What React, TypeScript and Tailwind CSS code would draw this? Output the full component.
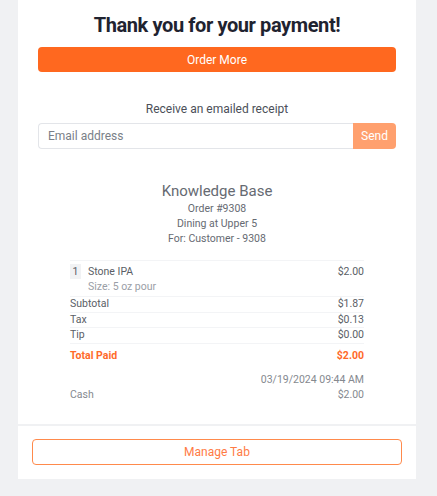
const font = { fontFamily: 'Roboto, "Liberation Sans", sans-serif' };

function Row({ label, value, className = '' }: { label: string; value: string; className?: string }) {
  return (
    <div className={`flex justify-between border-t border-gray-100 h-[15.5px] items-center ${className}`}>
      <span>{label}</span>
      <span>{value}</span>
    </div>
  );
}

export default function App() {
  return (
    <div className="min-h-[496px] w-[437px] bg-[#f0f1f3]" style={font}>
      <div className="mx-[18px] w-[398px]">
        <div className="bg-white px-5 pt-[13px] pb-[22px]">
          <h1 className="text-center text-[20px] font-bold leading-[24px] text-[#1f2330] tracking-[-0.4px]">
            Thank you for your payment!
          </h1>
          <button className="mt-[10px] w-full h-[25px] rounded bg-[#ff681f] text-white text-[12px]">
            Order More
          </button>

          <p className="mt-[28px] text-center text-[12px] text-[#4b4f58]">Receive an emailed receipt</p>
          <div className="mt-[5px] flex h-[26px]">
            <input
              className="flex-1 min-w-0 rounded-l border border-r-0 border-[#e3e5e9] px-[9px] text-[12px] text-gray-700 placeholder:text-[#7a7f88] outline-none"
              placeholder="Email address"
            />
            <button className="w-[43px] rounded-r bg-[#ffa06e] text-white text-[12px]">Send</button>
          </div>

          <div className="mt-[33px] text-center text-[#666a72]">
            <div className="text-[15px] leading-[18px]">Knowledge Base</div>
            <div className="text-[10.5px] leading-[15px] mt-[1px]">Order #9308</div>
            <div className="text-[10.5px] leading-[15px]">Dining at Upper 5</div>
            <div className="text-[10.5px] leading-[15px]">For: Customer - 9308</div>
          </div>

          <div className="mt-[14px] mx-[32px] text-[10.5px] text-[#5a5e66]">
            <div className="flex border-t border-gray-100 pt-[3px] pb-[2px]">
              <span className="w-[11px] h-[15px] bg-[#f1f2f4] flex items-center justify-center">1</span>
              <div className="ml-[7px] flex-1">
                <div className="flex justify-between leading-[15px]">
                  <span>Stone IPA</span>
                  <span>$2.00</span>
                </div>
                <div className="text-[#9a9ea6] leading-[15px]">Size: 5 oz pour</div>
              </div>
            </div>
            <Row label="Subtotal" value="$1.87" />
            <Row label="Tax" value="$0.13" />
            <Row label="Tip" value="$0.00" />
            <div className="flex justify-between border-t border-gray-100 pt-[4px] font-bold text-[#ff6a2a] leading-[16px]">
              <span>Total Paid</span>
              <span>$2.00</span>
            </div>
            <div className="mt-[8px] text-right text-[#85898f] leading-[15px]">03/19/2024 09:44 AM</div>
            <div className="flex justify-between text-[#85898f] leading-[15px]">
              <span>Cash</span>
              <span>$2.00</span>
            </div>
          </div>
        </div>
        <div className="h-[2px]" />
        <div className="bg-white px-[14px] pt-[13px] pb-[14px]">
          <button className="w-full h-[26px] rounded border border-[#ff8a4c] text-[#ff7b45] text-[12px]">
            Manage Tab
          </button>
        </div>
      </div>
    </div>
  );
}
